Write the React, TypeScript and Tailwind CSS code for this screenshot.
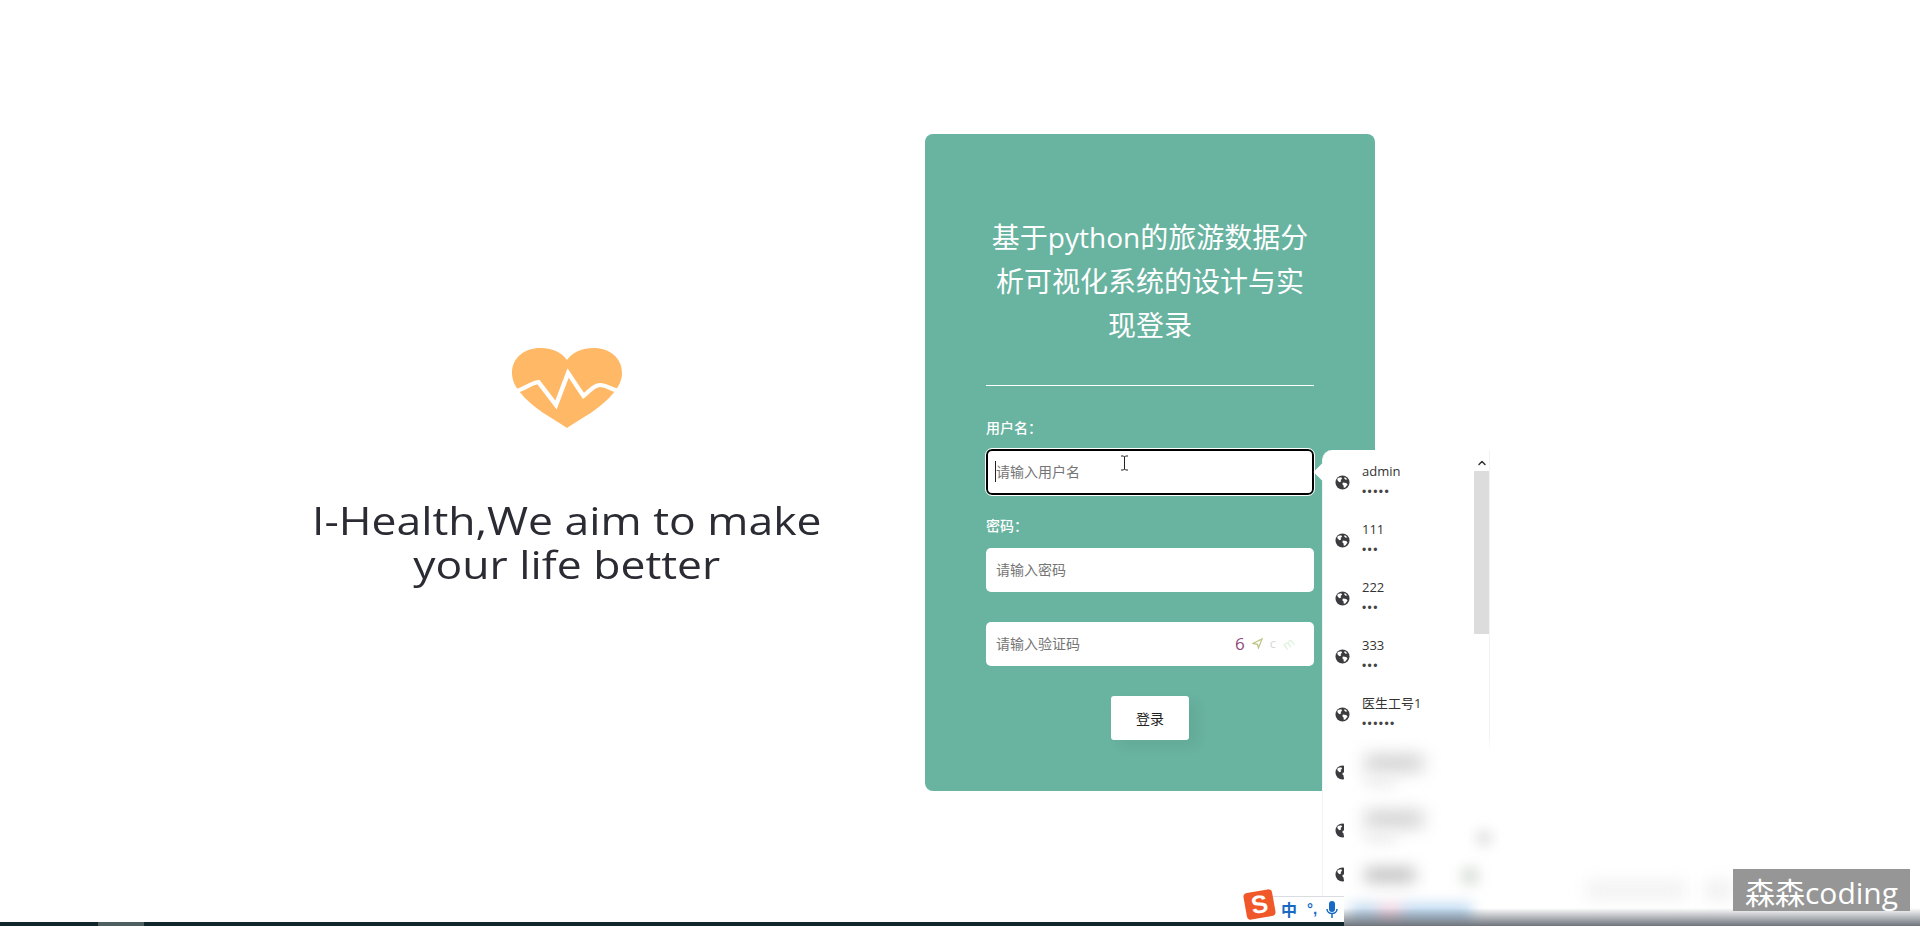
import type { ReactNode } from "react";
import { ChevronUp } from "lucide-react";

const cjk = "font-['Open_Sans','Noto_Sans_CJK_SC',sans-serif]";

const logins = [
  { name: "admin", dots: "•••••", h: "h-[58px]" },
  { name: "111", dots: "•••", h: "h-[58px]" },
  { name: "222", dots: "•••", h: "h-[58px]" },
  { name: "333", dots: "•••", h: "h-[58px]" },
  { name: "医生工号1", dots: "••••••", h: "h-[58px]" },
  { name: "", dots: "", h: "h-[58px]" },
  { name: "", dots: "", h: "h-[44px]" },
  { name: "", dots: "", h: "h-[20px]" },
];

const GlobeIcon = () => (
  <svg viewBox="0 0 16 16" className="h-[15px] w-[15px] shrink-0">
    <circle cx="8" cy="8" r="7.5" fill="#3c3c40" />
    <path d="M3 3.2 6.6 2.4 7.6 4 6 5.2 6.6 6.8 4.6 7.6 2.4 5.4ZM8.4 8 12 8.6 13.4 10 11 13.4 9.4 13.6 9 11 7.8 9.8ZM10.4 2.2 13.2 4.6 11.4 5 9.8 3.6Z" fill="#fff" />
  </svg>
);

const HeartLogo = () => (
  <svg viewBox="0 0 100 80" preserveAspectRatio="none" className="h-[80px] w-[110px]">
    <path d="M50 80C38 71 18 60 7 44 2 37 0 31 0 25 0 10 11 0 26 0 36 0 45 4 50 12 55 4 64 0 74 0 89 0 100 10 100 25 100 31 98 37 93 44 82 60 62 71 50 80Z" fill="#ffb966" />
    <path d="M2 43C10 43 16 35 24 34L40 57 51 25 65 48C70 44 74 37 80 37 86 37 90 42 98 43" fill="none" stroke="#fff" strokeWidth="4" />
  </svg>
);

const CaptchaCode = () => (
  <div className="flex items-center gap-[7px] select-none">
    <span className="font-['Open_Sans',sans-serif] text-[17px] text-[#8e4a7c]">6</span>
    <svg viewBox="0 0 12 12" className="h-[11px] w-[11px]">
      <path d="M1 6 11 1 7 11 6 7Z" fill="none" stroke="#bfc587" strokeWidth="1.4" />
    </svg>
    <span className="text-[13px] text-[#d8d8d8]">c</span>
    <span className="rotate-[-35deg] text-[12px] text-[#d9f0d6]">m</span>
  </div>
);

const SavedLogins = () => (
  <div className="absolute left-[1322px] top-[450px] h-[446px] w-[168px] rounded-tl-[10px] border-x border-[#f3f3f3] bg-white">
    <div className="absolute left-[-7px] top-[16px] h-[12px] w-[12px] rotate-45 bg-white" />
    <div className="flex flex-col pl-[12px] pt-[13px]">
      {logins.map((login, i) => (
        <div key={i} className={`flex ${login.h} shrink-0 items-start gap-[12px]`}>
          <div className="pt-[12px]">
            <GlobeIcon />
          </div>
          <div className={`${cjk} -mt-px text-[#333]`}>
            <div className="h-[23px] text-[13px] leading-[18px]">{login.name}</div>
            <div className="font-['Liberation_Sans',sans-serif] text-[12px] leading-[14px] tracking-[1.4px] text-[#444]">{login.dots}</div>
          </div>
        </div>
      ))}
    </div>
    {/* scrollbar */}
    <div className="absolute right-0 top-0 flex w-[15px] flex-col items-center">
      <ChevronUp className="mt-[7px] h-[12px] w-[12px] text-[#333]" strokeWidth={3} />
      <div className="mt-[2px] h-[163px] w-[15px] bg-[#dcdcdc]" />
    </div>
  </div>
);

// video blur over the corner, it hides the lower part of the list
const BlurredCorner = () => (
  <div className="absolute bottom-0 left-[1344px] right-0 top-[738px] overflow-hidden">
    <div className="h-[14px] bg-gradient-to-b from-white/0 to-white" />
    <div className="relative h-[174px] bg-white">
      <div className="absolute left-[21px] top-[4px] h-[14px] w-[58px] bg-[#c6c6c6] blur-[9px]" />
      <div className="absolute left-[21px] top-[26px] h-[8px] w-[30px] bg-[#e8e8e8] blur-[7px]" />
      <div className="absolute left-[21px] top-[60px] h-[14px] w-[58px] bg-[#c6c6c6] blur-[9px]" />
      <div className="absolute left-[21px] top-[82px] h-[8px] w-[30px] bg-[#e8e8e8] blur-[7px]" />
      <div className="absolute left-[132px] top-[78px] h-[16px] w-[16px] bg-[#e6e6e6] blur-[6px]" />
      <div className="absolute left-[21px] top-[116px] h-[14px] w-[50px] bg-[#bcbcbc] blur-[8px]" />
      <div className="absolute left-[118px] top-[116px] h-[16px] w-[16px] bg-[#d5dcd5] blur-[7px]" />
      <div className="absolute left-[242px] top-[128px] h-[20px] w-[100px] bg-[#f3f3f3] blur-[8px]" />
      <div className="absolute left-[362px] top-[128px] h-[20px] w-[26px] bg-[#f0f0f0] blur-[8px]" />
      <div className="absolute left-[6px] top-[152px] flex blur-[7px]">
        <div className="h-[26px] w-[28px] bg-[#c0d9ef]" />
        <div className="h-[26px] w-[24px] bg-[#ecd0de]" />
        <div className="h-[26px] w-[70px] bg-[#bcd8f1]" />
      </div>
    </div>
    <div className="absolute inset-x-0 bottom-0 h-[18px] bg-gradient-to-b from-white/0 to-[#6f757d]" />
  </div>
);

const ImeBar = () => (
  <div className="absolute left-[1245px] top-[891px] h-[31px] w-[100px]">
    <div className="absolute inset-x-0 bottom-0 flex h-[26px] items-center border-t border-[#d9dde2] bg-white pl-[36px]">
      <span className={`${cjk} text-[16px] font-bold text-[#1769c4]`}>中</span>
      <span className="ml-[10px] font-['Liberation_Sans',sans-serif] text-[15px] font-bold text-[#1769c4]">°,</span>
      <svg viewBox="0 0 12 18" className="ml-[9px] h-[18px] w-[12px]">
        <rect x="3" y="0" width="6" height="11" rx="3" fill="#1769c4" />
        <path d="M1 8c0 6 10 6 10 0M6 13v4" fill="none" stroke="#1769c4" strokeWidth="1.5" />
      </svg>
    </div>
    <div className="absolute left-0 top-0 flex h-[27px] w-[29px] rotate-[-10deg] items-center justify-center rounded-[4px] bg-[#f0582a] font-['Liberation_Sans',sans-serif] text-[25px] font-bold text-white">
      S
    </div>
  </div>
);

const TextCursor = () => (
  <svg viewBox="0 0 9 16" className="absolute left-[1120px] top-[455px] h-[16px] w-[9px]">
    <path d="M1 1h2.5L4.5 2 5.5 1H8M1 15h2.5L4.5 14 5.5 15H8M4.5 2v12" fill="none" stroke="#222" strokeWidth="1" />
  </svg>
);

const Field = ({ placeholder, focused, children }: { placeholder: string; focused?: boolean; children?: ReactNode }) => (
  <div
    className={
      focused
        ? "flex h-[46px] items-center justify-between rounded-[6px] border-2 border-black bg-white pb-[2px] pl-[7px] pr-[20px] outline outline-1 outline-white"
        : "flex h-[44px] items-center justify-between rounded-[5px] bg-white pb-px pl-[10px] pr-[20px]"
    }
  >
    <span className={focused ? "border-l border-[#222] text-[14px] text-[#757575]" : "text-[14px] text-[#757575]"}>{placeholder}</span>
    {children}
  </div>
);

export default function App() {
  return (
    <div className={`${cjk} relative h-[926px] overflow-hidden bg-white`}>
      <div className="flex pl-[247px] pt-[134px]">
        <div className="flex w-[640px] flex-col items-center pt-[214px]">
          <HeartLogo />
          <h2 className="mt-[70px] scale-x-[1.17] whitespace-nowrap text-center font-['Open_Sans',sans-serif] text-[38px] leading-[44px] text-[#2b2b33]">
            I-Health,We aim to make
            <br />
            your life better
          </h2>
        </div>

        <div className="ml-[38px] flex h-[657px] w-[450px] flex-col rounded-[8px] bg-[#69b3a1] px-[61px] pt-[81px]">
          <h1 className="text-center text-[28px] leading-[44px] text-white">基于python的旅游数据分析可视化系统的设计与实现登录</h1>
          <div className="mt-[38px] border-t border-white" />
          <label className="mt-[33px] text-[14px] font-medium leading-[18px] text-white">用户名：</label>
          <div className="mt-[12px]">
            <Field placeholder="请输入用户名" focused />
          </div>
          <label className="mt-[22px] text-[14px] font-medium leading-[18px] text-white">密码：</label>
          <div className="mt-[13px]">
            <Field placeholder="请输入密码" />
          </div>
          <div className="mt-[30px]">
            <Field placeholder="请输入验证码">
              <CaptchaCode />
            </Field>
          </div>
          <button className="mx-auto mt-[30px] h-[44px] w-[78px] rounded-[3px] bg-white text-[14px] text-[#222] shadow-[8px_6px_14px_rgba(0,0,0,0.06)]">
            登录
          </button>
        </div>
      </div>

      <TextCursor />
      <SavedLogins />
      <div className="absolute bottom-0 left-0 right-0 h-[4px] bg-[#10262a]">
        <div className="ml-[98px] h-full w-[46px] bg-[#4d5f5f]" />
      </div>
      <ImeBar />
      <BlurredCorner />
      <div className={`${cjk} absolute left-[1733px] top-[869px] h-[42px] w-[177px] bg-[#969696] text-center text-[30px] leading-[48px] text-white`}>
        森森coding
      </div>
    </div>
  );
}
